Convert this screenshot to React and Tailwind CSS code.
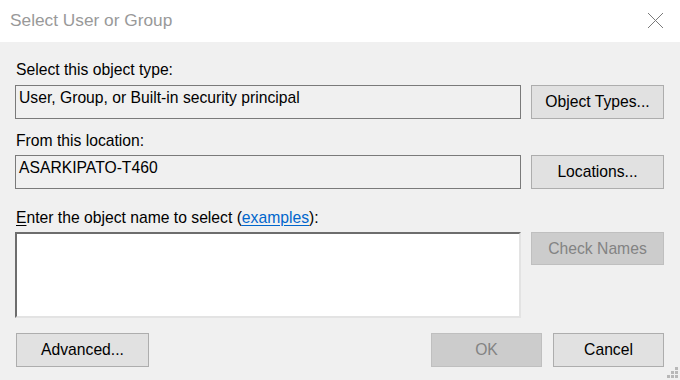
import React from 'react';

const font = { fontFamily: '"Liberation Sans", Arial, sans-serif' };

function Btn({ children, disabled, className = '' }) {
  return (
    <div
      className={`flex items-center justify-center border text-[15.7px] leading-none ${
        disabled ? 'bg-[#cccccc] border-[#bfbfbf] text-[#838383]' : 'bg-[#e1e1e1] border-[#adadad] text-black'
      } ${className}`}
    >
      {children}
    </div>
  );
}

export default function App() {
  return (
    <div className="w-[680px] h-[380px] bg-[#f0f0f0] flex flex-col overflow-hidden relative" style={font}>
      {/* title bar */}
      <div className="h-[42px] bg-white flex items-center justify-between pl-[10px] pr-[16px] shrink-0">
        <span className="text-[17.3px] text-[#999999]">Select User or Group</span>
        <svg width="17" height="17" viewBox="0 0 17 17" className="mt-[-2px]">
          <path d="M1 1 L16 16 M16 1 L1 16" stroke="#7a7a7a" strokeWidth="1" fill="none" />
        </svg>
      </div>

      <div className="flex flex-col pl-[15px] pr-[16px]">
        <div className="text-[15.7px] leading-[18px] text-black mt-[19px] ml-[1px]">Select this object type:</div>
        <div className="flex gap-[10px] mt-[6px]">
          <div className="w-[506px] h-[34px] border border-[#7a7a7a] bg-[#f0f0f0] px-[3px] pt-[3px] text-[15.7px] leading-[18px] text-black">
            User, Group, or Built-in security principal
          </div>
          <Btn className="w-[133px] h-[34px]">Object Types...</Btn>
        </div>

        <div className="text-[15.7px] leading-[18px] text-black mt-[13px] ml-[1px]">From this location:</div>
        <div className="flex gap-[10px] mt-[5px]">
          <div className="w-[506px] h-[34px] border border-[#7a7a7a] bg-[#f0f0f0] px-[3px] pt-[3px] text-[15.7px] leading-[18px] text-black">
            ASARKIPATO-T460
          </div>
          <Btn className="w-[133px] h-[34px]">Locations...</Btn>
        </div>

        <div className="text-[15.7px] leading-[18px] text-black mt-[20px] ml-[1px]">
          <span className="underline underline-offset-2">E</span>nter the object name to select (
          <span className="text-[#0066cc] underline underline-offset-2">examples</span>):
        </div>
        <div className="flex gap-[10px] mt-[5px]">
          <div className="w-[506px] h-[86px] border-t-2 border-l-2 border-t-[#6d6d6d] border-l-[#6d6d6d] border-r-2 border-b-2 border-r-[#e3e3e3] border-b-[#e3e3e3] bg-white" />
          <Btn disabled className="w-[133px] h-[33px]">Check Names</Btn>
        </div>

        <div className="flex mt-[15px] ml-[1px]">
          <Btn className="w-[133px] h-[34px]">Advanced...</Btn>
          <div className="flex-1" />
          <Btn disabled className="w-[111px] h-[34px]">OK</Btn>
          <Btn className="w-[111px] h-[34px] ml-[11px]">Cancel</Btn>
        </div>
      </div>

      {/* resize grip */}
      <svg width="12" height="12" viewBox="0 0 12 12" className="absolute right-[2px] bottom-[2px]">
        <rect x="9" y="1" width="3" height="3" fill="#b8b8b8" />
        <rect x="5" y="5" width="3" height="3" fill="#b8b8b8" />
        <rect x="9" y="5" width="3" height="3" fill="#b8b8b8" />
        <rect x="1" y="9" width="3" height="3" fill="#b8b8b8" />
        <rect x="5" y="9" width="3" height="3" fill="#b8b8b8" />
        <rect x="9" y="9" width="3" height="3" fill="#b8b8b8" />
      </svg>
    </div>
  );
}
